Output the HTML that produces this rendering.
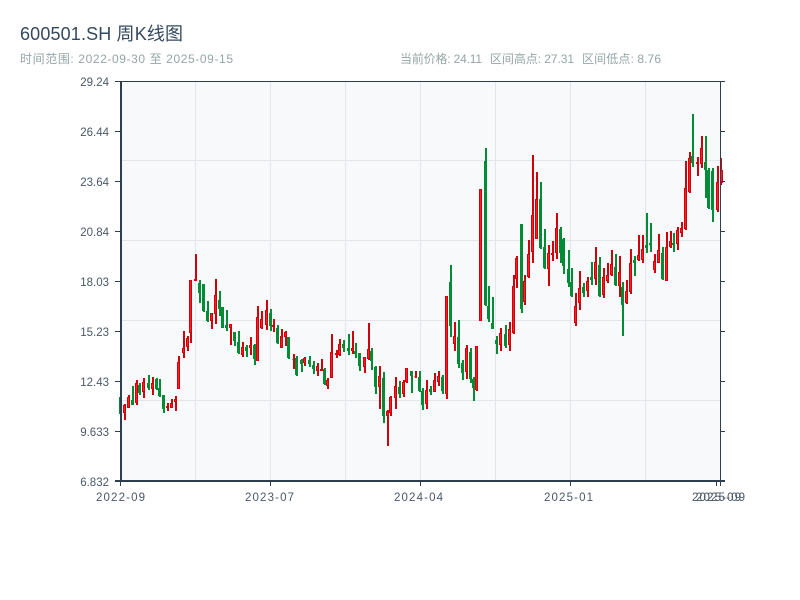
<!DOCTYPE html>
<html lang="zh"><head><meta charset="utf-8"><title>600501.SH 周K线图</title>
<style>html,body{margin:0;padding:0;background:#fff}svg{display:block}text{font-family:"Liberation Sans","Noto Sans CJK SC",sans-serif}</style>
</head><body>
<svg width="800" height="600" viewBox="0 0 800 600" xmlns="http://www.w3.org/2000/svg">
<rect x="120" y="81" width="600" height="400" fill="#f8f9fb"/>
<path d="M195.5 81V481M270.5 81V481M345.5 81V481M420.5 81V481M495.5 81V481M570.5 81V481M645.5 81V481M120 160.5H720M120 240.5H720M120 320.5H720M120 400.5H720" stroke="#e2e5eb" stroke-width="1" fill="none"/>
<g shape-rendering="crispEdges">
<path transform="translate(1 0)" fill="none" stroke="#008c36" stroke-width="2" d="M120 395V415M132 386V405M139 383V395M148 375V390M156 378V390M159 379V397M163 395V413M199 280V303M203 284V312M207 301V322M219 291V316M222 307V328M226 310V331M234 332V346M238 331V354M246 345V357M254 344V365M270 309V331M277 325V344M288 337V359M296 356V376M301 359V372M309 356V367M313 361V374M324 368V385M343 340V352M348 334V355M355 343V358M359 353V371M371 348V370M375 366V394M383 372V423M399 381V398M411 371V393M419 371V392M422 388V410M430 386V395M442 375V394M450 265V337M458 320V368M462 360V380M470 348V383M473 377V401M485 148V306M488 286V322M492 297V329M496 336V354M505 325V348M521 224V313M540 182V249M544 229V269M560 227V263M563 238V274M568 250V287M571 268V297M583 283V297M591 262V285M599 257V297M615 254V286M622 282V336M634 256V276M646 213V253M650 223V252M662 247V280M673 233V252M692 114V167M705 136V198M708 168V209M712 168V222"/>
<path fill="#008c36" d="M119 397h3V414h-3zM131 400h3V405h-3zM138 385h3V393h-3zM147 383h3V388h-3zM155 379h3V389h-3zM158 388h3V396h-3zM162 395h3V409h-3zM198 283h3V293h-3zM202 284h3V311h-3zM206 311h3V321h-3zM218 300h3V309h-3zM221 307h3V328h-3zM225 325h3V328h-3zM233 332h3V341h-3zM237 342h3V353h-3zM245 347h3V351h-3zM253 345h3V359h-3zM269 313h3V326h-3zM276 328h3V343h-3zM287 337h3V358h-3zM295 358h3V375h-3zM300 360h3V364h-3zM308 360h3V364h-3zM312 365h3V369h-3zM323 369h3V384h-3zM342 344h3V348h-3zM347 348h3V351h-3zM354 351h3V354h-3zM358 353h3V366h-3zM370 351h3V361h-3zM374 367h3V387h-3zM382 378h3V416h-3zM398 387h3V394h-3zM410 371h3V376h-3zM418 377h3V391h-3zM421 391h3V405h-3zM429 389h3V392h-3zM441 377h3V391h-3zM449 282h3V326h-3zM457 337h3V364h-3zM461 363h3V373h-3zM469 352h3V379h-3zM472 379h3V388h-3zM484 161h3V305h-3zM487 306h3V319h-3zM491 323h3V329h-3zM495 340h3V344h-3zM504 334h3V346h-3zM520 224h3V309h-3zM539 199h3V248h-3zM543 247h3V268h-3zM559 229h3V253h-3zM562 239h3V266h-3zM567 269h3V283h-3zM570 282h3V296h-3zM582 287h3V293h-3zM590 277h3V280h-3zM598 265h3V296h-3zM614 267h3V285h-3zM621 287h3V305h-3zM633 260h3V263h-3zM645 245h3V248h-3zM649 243h3V245h-3zM661 253h3V279h-3zM672 243h3V245h-3zM691 156h3V163h-3zM704 162h3V170h-3zM707 170h3V208h-3zM711 171h3V210h-3z"/>
<path transform="translate(1 0)" fill="none" stroke="#d0000a" stroke-width="2" d="M124 404V420M128 395V408M136 380V405M143 378V398M152 377V395M167 403V411M171 399V408M175 396V411M178 356V389M183 331V358M187 336V351M190 280V343M195 254V281M211 313V329M215 279V324M230 324V345M242 342V357M250 337V355M257 306V361M261 311V329M266 300V330M273 319V332M281 329V348M285 331V346M293 354V369M304 357V366M317 363V376M321 359V371M327 378V389M331 334V378M336 350V358M339 339V356M352 331V354M364 357V373M368 323V360M379 366V409M387 410V446M390 396V416M395 377V409M403 380V397M406 368V383M415 371V378M426 380V409M434 373V392M438 371V386M446 296V399M454 322V351M466 345V379M476 346V391M480 189V321M500 328V351M509 322V351M513 275V334M516 256V288M524 275V305M528 240V278M532 155V263M536 172V239M548 245V286M552 241V261M556 213V259M575 293V326M579 271V310M587 277V297M595 247V285M603 268V298M607 263V283M611 250V276M619 256V297M626 280V304M630 249V294M638 235V261M642 235V263M654 254V273M658 234V263M666 232V281M670 231V248M677 227V250M681 222V237M685 161V230M689 152V193M697 157V176M701 136V168M717 166V212M720 158V185"/>
<path fill="#ff1c24" stroke="#d0000a" stroke-width="1" d="M123.5 405.5h2V412.5h-2zM127.5 397.5h2V407.5h-2zM135.5 383.5h2V402.5h-2zM142.5 382.5h2V391.5h-2zM151.5 383.5h2V388.5h-2zM166.5 406.5h2V407.5h-2zM170.5 403.5h2V407.5h-2zM174.5 399.5h2V401.5h-2zM177.5 362.5h2V388.5h-2zM182.5 348.5h2V352.5h-2zM186.5 338.5h2V346.5h-2zM189.5 280.5h2V332.5h-2zM194.5 279.5h2V280.5h-2zM210.5 313.5h2V320.5h-2zM214.5 295.5h2V313.5h-2zM229.5 324.5h2V327.5h-2zM241.5 347.5h2V354.5h-2zM249.5 345.5h2V347.5h-2zM256.5 317.5h2V360.5h-2zM260.5 319.5h2V327.5h-2zM265.5 310.5h2V324.5h-2zM272.5 325.5h2V326.5h-2zM280.5 336.5h2V347.5h-2zM284.5 332.5h2V336.5h-2zM292.5 359.5h2V359.5h-2zM303.5 358.5h2V362.5h-2zM316.5 366.5h2V370.5h-2zM320.5 369.5h2V370.5h-2zM326.5 380.5h2V385.5h-2zM330.5 352.5h2V377.5h-2zM335.5 353.5h2V354.5h-2zM338.5 344.5h2V354.5h-2zM351.5 348.5h2V350.5h-2zM363.5 357.5h2V366.5h-2zM367.5 349.5h2V358.5h-2zM378.5 376.5h2V386.5h-2zM386.5 411.5h2V415.5h-2zM389.5 397.5h2V412.5h-2zM394.5 386.5h2V397.5h-2zM402.5 382.5h2V393.5h-2zM405.5 368.5h2V381.5h-2zM414.5 376.5h2V376.5h-2zM425.5 390.5h2V403.5h-2zM433.5 380.5h2V391.5h-2zM437.5 376.5h2V381.5h-2zM445.5 296.5h2V393.5h-2zM453.5 336.5h2V343.5h-2zM465.5 348.5h2V371.5h-2zM475.5 346.5h2V389.5h-2zM479.5 189.5h2V320.5h-2zM499.5 333.5h2V344.5h-2zM508.5 329.5h2V344.5h-2zM512.5 286.5h2V332.5h-2zM515.5 258.5h2V278.5h-2zM523.5 281.5h2V301.5h-2zM527.5 254.5h2V276.5h-2zM531.5 215.5h2V251.5h-2zM535.5 199.5h2V238.5h-2zM547.5 253.5h2V268.5h-2zM551.5 253.5h2V254.5h-2zM555.5 228.5h2V252.5h-2zM574.5 306.5h2V322.5h-2zM578.5 288.5h2V302.5h-2zM586.5 281.5h2V290.5h-2zM594.5 262.5h2V278.5h-2zM602.5 277.5h2V294.5h-2zM606.5 275.5h2V280.5h-2zM610.5 264.5h2V274.5h-2zM618.5 272.5h2V285.5h-2zM625.5 291.5h2V302.5h-2zM629.5 263.5h2V291.5h-2zM637.5 255.5h2V259.5h-2zM641.5 249.5h2V259.5h-2zM653.5 261.5h2V269.5h-2zM657.5 250.5h2V262.5h-2zM665.5 247.5h2V280.5h-2zM669.5 241.5h2V246.5h-2zM676.5 230.5h2V243.5h-2zM680.5 228.5h2V232.5h-2zM684.5 188.5h2V228.5h-2zM688.5 158.5h2V191.5h-2zM696.5 162.5h2V163.5h-2zM700.5 148.5h2V163.5h-2zM716.5 182.5h2V209.5h-2zM720.5 170.5h2V182.5h-2z"/>
</g>
<path fill="none" stroke="#2c3e50" stroke-width="1" d="M115 81.5H725M115 131.5H120M115 181.5H120M115 231.5H120M115 281.5H120M115 331.5H120M115 381.5H120M115 431.5H120M720 131.5H725M720 181.5H725M720 231.5H725M720 281.5H725M720 331.5H725M720 381.5H725M720 431.5H725M720.5 81V486M270.5 481V486M420.5 481V486M570.5 481V486M716.5 481V486M120.5 481V486"/>
<path fill="none" stroke="#2c3e50" stroke-width="2" d="M121 81V482M115 481H725"/>
<text x="20" y="40" font-size="18" fill="#34495e" textLength="163">600501.SH 周K线图</text>
<g font-size="12" fill="#95a5a6">
<text x="20" y="63" textLength="213">时间范围: 2022-09-30 至 2025-09-15</text>
<text x="400" y="63" textLength="82">当前价格: 24.11</text>
<text x="490" y="63" textLength="84">区间高点: 27.31</text>
<text x="582" y="63" textLength="79">区间低点: 8.76</text>
</g>
<g font-size="11.5" fill="#4a5868" text-anchor="end">
<text x="109" y="86">29.24</text>
<text x="109" y="136">26.44</text>
<text x="109" y="186">23.64</text>
<text x="109" y="236">20.84</text>
<text x="109" y="286">18.03</text>
<text x="109" y="336">15.23</text>
<text x="109" y="386">12.43</text>
<text x="109" y="436">9.633</text>
<text x="109" y="486">6.832</text>
</g>
<g font-size="11.5" fill="#4a5868">
<text x="96" y="501" textLength="49">2022-09</text>
<text x="245" y="501" textLength="49">2023-07</text>
<text x="394" y="501" textLength="49">2024-04</text>
<text x="544" y="501" textLength="49">2025-01</text>
<text x="692" y="501" textLength="49">2025-09</text>
<text x="696" y="501" textLength="49">2025-09</text>
</g>
</svg>
</body></html>
